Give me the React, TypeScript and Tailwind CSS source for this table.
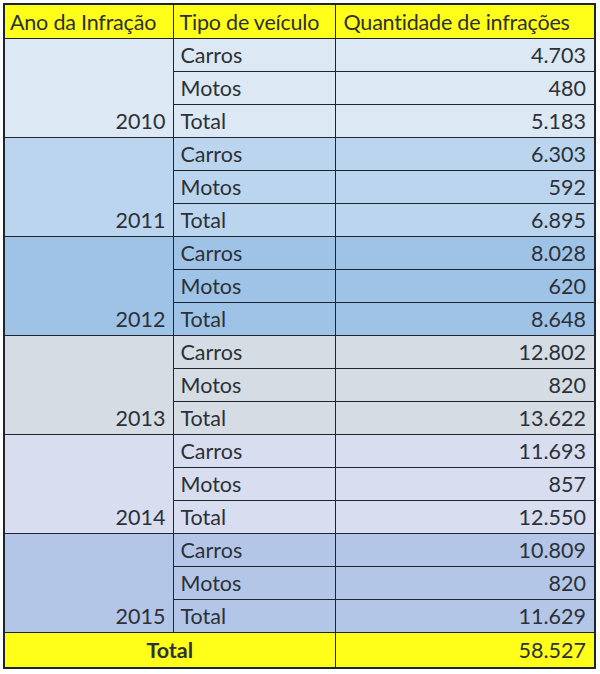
const groups = [
  { year: "2010", bg: "bg-[#dce8f4]", values: ["4.703", "480", "5.183"] },
  { year: "2011", bg: "bg-[#bcd5ee]", values: ["6.303", "592", "6.895"] },
  { year: "2012", bg: "bg-[#9fc3e7]", values: ["8.028", "620", "8.648"] },
  { year: "2013", bg: "bg-[#d5dce4]", values: ["12.802", "820", "13.622"] },
  { year: "2014", bg: "bg-[#d9ddf0]", values: ["11.693", "857", "12.550"] },
  { year: "2015", bg: "bg-[#b4c6e7]", values: ["10.809", "820", "11.629"] },
];

const types = ["Carros", "Motos", "Total"];

export default function App() {
  return (
    <div className="h-[674px] w-[600px] bg-white pl-[3px] pt-[3px] font-['Lato',sans-serif] text-[21.5px] text-[#2c3138]">
      <table className="w-[593px] table-fixed border-collapse border-2 border-[#1c2530]">
        <colgroup>
          <col className="w-[169px]" />
          <col className="w-[162px]" />
          <col />
        </colgroup>
        <thead>
          <tr className="h-[34px] bg-[#ffff1a] leading-none">
            <th className="border border-[#1c2530] px-[5px] pt-[2px] text-left font-normal tracking-[-0.2px]">Ano da Infração</th>
            <th className="border border-[#1c2530] px-[6px] pt-[2px] text-left font-normal tracking-[-0.2px]">Tipo de veículo</th>
            <th className="border border-[#1c2530] px-[8px] pt-[2px] text-left font-normal tracking-[-0.2px]">Quantidade de infrações</th>
          </tr>
        </thead>
        <tbody>
          {groups.map((g) =>
            types.map((t, i) => (
              <tr key={g.year + t} className={`h-[33px] leading-none ${g.bg}`}>
                {i === 0 && (
                  <td rowSpan={3} className="border border-[#1c2530] px-[7px] pb-[4px] text-right align-bottom">
                    {g.year}
                  </td>
                )}
                <td className="border border-[#1c2530] px-[7px] pt-[3px]">{t}</td>
                <td className="border border-[#1c2530] px-[8px] pt-[3px] text-right">{g.values[i]}</td>
              </tr>
            ))
          )}
          <tr className="h-[36px] bg-[#ffff1a] leading-none">
            <td colSpan={2} className="border border-[#1c2530] pt-[2px] text-center font-bold">Total</td>
            <td className="border border-[#1c2530] px-[8px] pt-[2px] text-right">58.527</td>
          </tr>
        </tbody>
      </table>
    </div>
  );
}
